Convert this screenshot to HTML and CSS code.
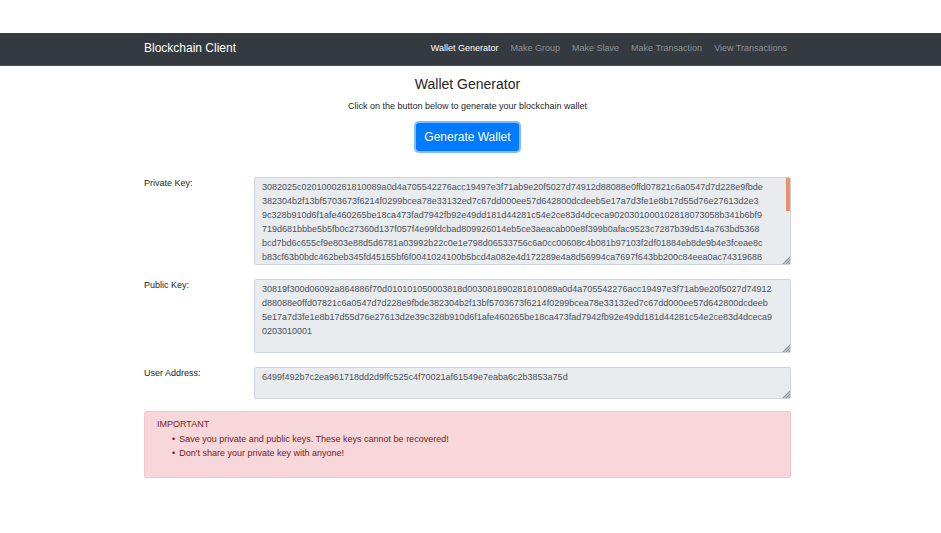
FILE: index.html
```html
<!DOCTYPE html>
<html lang="en">
<head>
<meta charset="utf-8">
<title>Blockchain Client</title>
<link rel="stylesheet" href="styles.css">
</head>
<body>
<nav class="navbar">
  <div class="container navbar-inner">
    <a class="brand" href="#">Blockchain Client</a>
    <ul class="nav-list">
      <li><a class="nav-link active" href="#">Wallet Generator</a></li>
      <li><a class="nav-link" href="#">Make Group</a></li>
      <li><a class="nav-link" href="#">Make Slave</a></li>
      <li><a class="nav-link" href="#">Make Transaction</a></li>
      <li><a class="nav-link" href="#">View Transactions</a></li>
    </ul>
  </div>
</nav>
<div class="page">
<main class="container">
  <header class="intro">
    <h1>Wallet Generator</h1>
    <p>Click on the button below to generate your blockchain wallet</p>
    <button class="btn" type="button">Generate Wallet</button>
  </header>
  <form class="wallet">
    <div class="row">
      <label for="private-key">Private Key:</label>
      <div class="field scrolls">
        <textarea id="private-key" rows="6" readonly>3082025c0201000281810089a0d4a705542276acc19497e3f71ab9e20f5027d74912d88088e0ffd07821c6a0547d7d228e9fbde
382304b2f13bf5703673f6214f0299bcea78e33132ed7c67dd000ee57d642800dcdeeb5e17a7d3fe1e8b17d55d76e27613d2e3
9c328b910d6f1afe460265be18ca473fad7942fb92e49dd181d44281c54e2ce83d4dceca9020301000102818073058b341b6bf9
719d681bbbe5b5fb0c27360d137f057f4e99fdcbad809926014eb5ce3aeacab00e8f399b0afac9523c7287b39d514a763bd5368
bcd7bd6c655cf9e803e88d5d6781a03992b22c0e1e798d06533756c6a0cc00608c4b081b97103f2df01884eb8de9b4e3fceae8c
b83cf63b0bdc462beb345fd45155bf6f0041024100b5bcd4a082e4d172289e4a8d56994ca7697f643bb200c84eea0ac74319688</textarea>
      </div>
    </div>
    <div class="row">
      <label for="public-key">Public Key:</label>
      <div class="field">
        <textarea id="public-key" rows="5" readonly>30819f300d06092a864886f70d010101050003818d003081890281810089a0d4a705542276acc19497e3f71ab9e20f5027d74912
d88088e0ffd07821c6a0547d7d228e9fbde382304b2f13bf5703673f6214f0299bcea78e33132ed7c67dd000ee57d642800dcdeeb
5e17a7d3fe1e8b17d55d76e27613d2e39c328b910d6f1afe460265be18ca473fad7942fb92e49dd181d44281c54e2ce83d4dceca9
0203010001</textarea>
      </div>
    </div>
    <div class="row">
      <label for="address">User Address:</label>
      <div class="field">
        <textarea id="address" rows="2" readonly>6499f492b7c2ea961718dd2d9ffc525c4f70021af61549e7eaba6c2b3853a75d</textarea>
      </div>
    </div>
  </form>
  <section class="alert">
    IMPORTANT
    <ul>
      <li>Save you private and public keys. These keys cannot be recovered!</li>
      <li>Don't share your private key with anyone!</li>
    </ul>
  </section>
</main>
</div>
</body>
</html>
```
FILE: styles.css
```css
* { box-sizing: border-box; }

body {
  margin: 33px 0 0;
  background: #fff;
  color: #212529;
  font: 9px/14px "Liberation Sans", Arial, sans-serif;
}

.container {
  width: calc(100% - 48px);
  max-width: 647px;
  margin: 0 auto;
}

.navbar {
  padding: 6px 6px 7px 0;
  background: #343a40;
  border-bottom: 1px solid #484d54;
}
.navbar-inner {
  display: flex;
  align-items: center;
  justify-content: space-between;
}
.brand {
  color: #fff;
  font-size: 12px;
  line-height: 19px;
  text-decoration: none;
}
.nav-list {
  display: flex;
  gap: 12px;
  margin: 0;
  padding: 0 4px 2px 0;
  list-style: none;
}
.nav-link {
  color: #8f9295;
  text-decoration: none;
}
.nav-link.active { color: #fff; }

.page { padding-right: 6px; }

.intro {
  padding-top: 9px;
  text-align: center;
}
h1 {
  margin: 0 0 6px;
  font-size: 14px;
  font-weight: 400;
  line-height: 18px;
}
p { margin: 0 0 10px; }
.btn {
  display: inline-block;
  padding: 5px 8px;
  border: 0;
  border-radius: 3px;
  background: #007bff;
  box-shadow: 0 0 0 2px #80bdff;
  color: #fff;
  font: 12px/18px "Liberation Sans", Arial, sans-serif;
}

.wallet {
  display: grid;
  gap: 14px;
  margin-top: 26px;
}
.row {
  display: grid;
  grid-template-columns: 110px 1fr;
}
label { margin-top: -1px; }
.field {
  position: relative;
  display: flex;
}
/* Resize grip in the lower right corner */
.field::after {
  content: "";
  position: absolute;
  right: 1px;
  bottom: 1px;
  width: 8px;
  height: 8px;
  background: repeating-linear-gradient(135deg, #93979b 0 1px, #b9bdc0 1px 2px);
  clip-path: polygon(100% 0, 100% 100%, 0 100%);
}
/* Scrollbar thumb */
.scrolls::before {
  content: "";
  position: absolute;
  top: 1px;
  right: 1px;
  width: 4px;
  height: 33px;
  background: #e9906f;
}
textarea {
  width: 100%;
  padding: 2px 7px 0;
  border: 1px solid #ced4da;
  border-radius: 2px;
  background: #e9ecef;
  color: #495057;
  font: inherit;
  white-space: pre;
  overflow: hidden;
  resize: none;
}

.alert {
  margin-top: 12px;
  padding: 5px 12px 17px;
  border: 1px solid #f5c6cb;
  border-radius: 2px;
  background: #f8d7da;
  color: #721c24;
}
.alert ul {
  margin: 1px 0 0;
  padding-left: 15px;
  list-style: none;
}
.alert li {
  display: flex;
  gap: 4px;
}
.alert li::before { content: "•"; }
```
